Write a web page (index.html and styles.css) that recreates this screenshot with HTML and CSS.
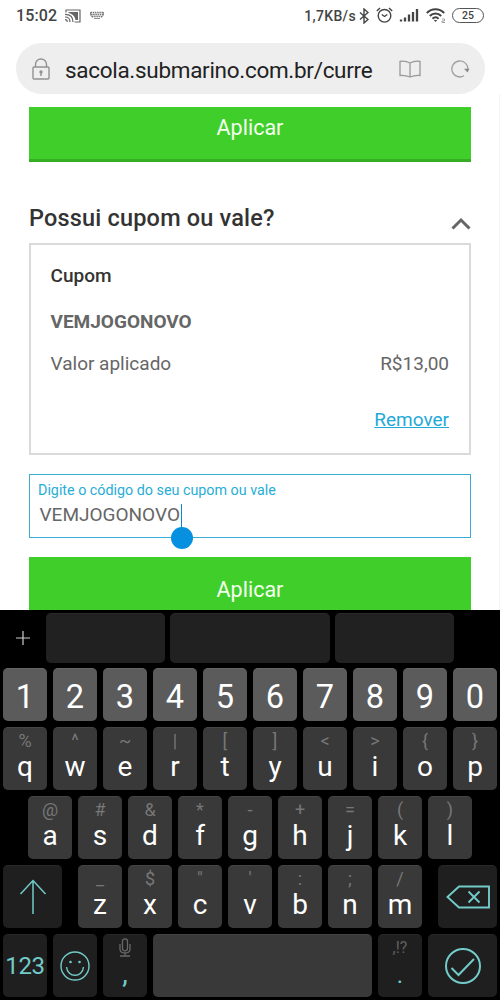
FILE: index.html
```html
<!DOCTYPE html>
<html lang="pt-BR">
<head>
<meta charset="utf-8">
<title>Sacola</title>
<link rel="stylesheet" href="styles.css">
</head>
<body>
<div class="screen">
  <header class="status">
    <span class="clock">15:02</span>
    <svg class="cast" width="16" height="14" viewBox="0 0 16 14" fill="none" stroke="#666" stroke-width="1.2"><path d="M1 3.500V1h14v12H9.500"/><path d="M3.500 3H13v8h-2.500C10 7 7 4.500 3.500 4z" fill="#666" stroke="none"/><path d="M0 5.300c5 0 8 3 8 7.700M0 8c3 0 5 2 5 5M0 10.700c1.500 0 2.300 1 2.300 2.300"/></svg>
    <svg class="kbd" width="14" height="9" viewBox="0 0 14 9" fill="none" stroke="#777"><path d="M.5 1.500h13M1 3.500h12M2 5.500h10" stroke-dasharray="1.500 .7" stroke-width="1.300"/><path d="M4 7.500h6M.5 1v3l2 2.500M13.500 1v3l-2 2.500" stroke-width=".8"/></svg>
    <span class="speed">1,7KB/s</span>
    <svg class="bt" width="10" height="16" viewBox="0 0 10 16" fill="none" stroke="#444" stroke-width="1.400"><path d="M1 4.500l8 7-4 3.500V1l4 3.500-8 7"/></svg>
    <svg class="alarm" width="17" height="16" viewBox="0 0 17 16" fill="none" stroke="#444" stroke-width="1.400"><circle cx="8.500" cy="8.800" r="6.300"/><path d="M5.800 7.500l2.700 2 2.800-2M.8 4L4 1M16.200 4L13 1"/></svg>
    <svg class="signal" width="20" height="14" viewBox="0 0 20 14" stroke="#444" stroke-width="2.300"><path d="M2 13.500v-2M6 13.500v-4M10 13.500V6.500M14 13.500V4M18 13.500V1"/></svg>
    <svg class="wifi" width="20" height="15" viewBox="0 0 20 15" fill="none" stroke="#444" stroke-width="2"><path d="M.8 5c5-5 12.400-5 17.400 0M3.800 8c3.200-3.500 8.200-3.500 11.400 0M6.500 10.800c2-2 4.500-2 6 0"/><path d="M7.800 12h3.400l-1.700 2z" fill="#444" stroke="none"/><path d="M16 11h2.500v2H16v1.500h3" stroke="#999" stroke-width=".9"/></svg>
    <span class="battery">25</span>
  </header>

  <div class="address">
    <svg class="lock" width="18" height="22" viewBox="0 0 18 22" fill="none" stroke="#929292" stroke-width="1.400"><rect x="1" y="9" width="16" height="12" rx="1"/><path d="M3.500 9V6.500a5.500 5.500 0 0 1 11 0V9M9 14v4"/><circle cx="9" cy="14" r="1" fill="#888"/></svg>
    <span class="url">sacola.submarino.com.br/curre</span>
    <svg class="book" width="22" height="18" viewBox="0 0 22 18" fill="none" stroke="#999" stroke-width="1.300"><path d="M11 3Q6 .5 1 1.500v14q5-.5 10 1.500 5-2 10-1.500v-14Q16 .5 11 3zM11 3v14"/></svg>
    <svg class="reload" width="19" height="18" viewBox="0 0 19 18" fill="none" stroke="#a0a0a0" stroke-width="1.300"><path d="M13 15.800A8 8 0 1 1 16.800 10"/><path d="M13 8.800h5.500L16.500 12.500z" fill="#888" stroke="none"/></svg>
  </div>

  <main class="page">
    <div class="apply apply-first">Aplicar</div>
    <div class="heading">
      <h1>Possui cupom ou vale?</h1>
      <svg width="20" height="13" viewBox="0 0 20 13" fill="none" stroke="#666" stroke-width="3"><path d="M1.500 11.500L10 3l8.500 8.500"/></svg>
    </div>
    <section class="coupon">
      <div class="coupon-title">Cupom</div>
      <div class="coupon-code">VEMJOGONOVO</div>
      <div class="coupon-value"><span>Valor aplicado</span><span>R$13,00</span></div>
      <a class="remove">Remover</a>
    </section>
    <div class="field">
      <div class="field-label">Digite o código do seu cupom ou vale</div>
      <div class="field-value"><span>VEMJOGONOVO</span><i class="caret"></i></div>
    </div>
    <div class="apply apply-last">Aplicar</div>
  </main>

  <div class="keyboard">
    <div class="suggest"><svg width="14" height="14" viewBox="0 0 14 14" stroke="#ccc" stroke-width="1.200"><path d="M0 7h14M7 0v14"/></svg><i></i><i></i><i></i></div>
    <div class="row numbers"><b>1</b><b>2</b><b>3</b><b>4</b><b>5</b><b>6</b><b>7</b><b>8</b><b>9</b><b>0</b></div>
    <div class="row">
      <div class="key"><small>%</small>q</div><div class="key"><small>^</small>w</div><div class="key"><small>~</small>e</div><div class="key"><small>|</small>r</div><div class="key"><small>[</small>t</div><div class="key"><small>]</small>y</div><div class="key"><small>&lt;</small>u</div><div class="key"><small>&gt;</small>i</div><div class="key"><small>{</small>o</div><div class="key"><small>}</small>p</div>
    </div>
    <div class="row">
      <div class="key"><small>@</small>a</div><div class="key"><small>#</small>s</div><div class="key"><small>&amp;</small>d</div><div class="key"><small>*</small>f</div><div class="key"><small>-</small>g</div><div class="key"><small>+</small>h</div><div class="key"><small>=</small>j</div><div class="key"><small>(</small>k</div><div class="key"><small>)</small>l</div>
    </div>
    <div class="row spread">
      <div class="key dark shift"><svg width="28" height="36" viewBox="0 0 28 36" fill="none" stroke="#72cbc9" stroke-width="1.500"><path d="M14 35V1.500M1.500 15L14 1.500 26.500 15"/></svg></div>
      <div class="group"><div class="key"><small>_</small>z</div><div class="key"><small>$</small>x</div><div class="key"><small>"</small>c</div><div class="key"><small>'</small>v</div><div class="key"><small>:</small>b</div><div class="key"><small>;</small>n</div><div class="key"><small>/</small>m</div></div>
      <div class="key dark shift"><svg width="44" height="24" viewBox="0 0 44 24" fill="none" stroke="#72cbc9" stroke-width="1.900"><path d="M1.500 12L13 1.500h30v21H13zM22.500 6.500l11 11M33.500 6.500l-11 11"/></svg></div>
    </div>
    <div class="row">
      <div class="key dark mode">123</div>
      <div class="key dark emoji"><svg width="30" height="30" viewBox="0 0 30 30" fill="none" stroke="#72cbc9" stroke-width="1.400"><circle cx="15" cy="15" r="14"/><path d="M6.500 16c1 11 16 11 17 0"/><circle cx="10.500" cy="11" r="1.300" fill="#72cbc9" stroke="none"/><circle cx="19.500" cy="11" r="1.300" fill="#72cbc9" stroke="none"/></svg></div>
      <div class="key dark comma"><svg width="12" height="19" viewBox="0 0 12 19" fill="none" stroke="#686868" stroke-width="1.300"><rect x="3.500" y=".8" width="5" height="12" rx="2.500"/><path d="M1 6v5q0 4 5 4t5-4V6M6 15v3M1 18h10"/></svg><span>,</span></div>
      <div class="key space"></div>
      <div class="key dark stop"><small>,!?</small><span>.</span></div>
      <div class="key dark enter"><svg width="36" height="36" viewBox="0 0 36 36" fill="none" stroke="#72cbc9" stroke-width="2"><circle cx="18" cy="18" r="17"/><path d="M6.500 20l7 7L29 11"/></svg></div>
    </div>
  </div>
</div>
</body>
</html>
```
FILE: styles.css
```css
* { box-sizing: border-box; }
body { margin: 0; background: #fff; font-family: Roboto, "Noto Sans", sans-serif; }
.screen { width: 500px; height: 1000px; overflow: hidden; display: flex; flex-direction: column; }
svg { display: block; flex: none; }

.status { height: 43px; padding: 0 16px; display: flex; align-items: flex-start; color: #444; flex: none; }
.clock { width: 42px; margin-top: 6px; font-size: 16px; line-height: 20px; font-weight: 500; letter-spacing: .1px; }
.cast { margin: 9px 0 0 7px; }
.kbd { margin: 11px 0 0 9px; }
.speed { margin: 7px 0 0 auto; font-size: 14px; line-height: 18px; font-weight: 500; letter-spacing: .35px; }
.bt { margin: 8px 0 0 3px; }
.alarm { margin: 7px 0 0 7px; }
.signal { margin: 8px 0 0 6px; }
.wifi { margin: 8px 0 0 7px; }
.battery { width: 32px; height: 15px; margin: 8px 0 0 6px; border: 1.5px solid #555; border-radius: 8px; font-size: 10.500px; line-height: 13px; font-weight: 500; text-align: center; }

.address { height: 51px; margin: 0 15px 0 16px; padding-left: 16px; border-radius: 26px; background: #eee; display: flex; align-items: center; flex: none; }
.url { width: 308px; margin-left: 15px; overflow: hidden; white-space: nowrap; font-size: 22.500px; letter-spacing: -.3px; line-height: 32px; color: #222; padding-top: 2px; }
.book { margin-left: 26px; }
.reload { margin-left: 30px; }

.page { height: 516px; padding: 13px 28px 0 29px; border-right: 1px solid #f4f4f4; flex: none; overflow: hidden; }
.apply { background: #40ce2a; color: #f4ffef; text-align: center; font-size: 21.500px; }
.apply-first { height: 55px; border-bottom: 3px solid #35ae23; line-height: 42px; }
.apply-last { height: 60px; margin-top: 19px; line-height: 66px; }
.heading { height: 81px; padding-top: 41px; display: flex; justify-content: space-between; }
.heading h1 { margin: 0; font-size: 23.500px; letter-spacing: .18px; line-height: 31px; font-weight: 500; color: #333; }
.heading svg { margin-top: 14px; }
.coupon { height: 212px; border: 2px solid #dadada; padding: 19px 20px 0 19.500px; color: #666; font-size: 19px; line-height: 24px; display: flex; flex-direction: column; }
.coupon-title { font-weight: 500; color: #333; }
.coupon-code { margin-top: 22px; font-weight: 700; }
.coupon-value { margin-top: 18px; display: flex; justify-content: space-between; }
.remove { margin-top: 32px; align-self: flex-end; color: #1fa9d8; text-decoration: underline; }
.field { height: 64px; margin-top: 19px; padding: 5px 9px 0 8px; border: 1px solid #3aabd2; }
.field-label { font-size: 14.300px; line-height: 20px; color: #27add6; }
.field-value { display: flex; padding-left: 1.500px; font-size: 19px; line-height: 30px; color: #666; }
.caret { position: relative; width: 1.500px; height: 26px; margin: 4px 0 0 .6px; background: #0788d1; }
.caret::after { content: ""; position: absolute; left: -10px; top: 23px; width: 22px; height: 22px; border-radius: 50%; background: #0690df; }

.keyboard { height: 390px; flex: none; background: #000; padding: 3px 3px 0; display: flex; flex-direction: column; gap: 6px; }
.suggest { height: 50px; display: grid; grid-template-columns: 38px 119px 160px 119px; column-gap: 5px; align-items: stretch; flex: none; }
.suggest svg { margin: 18px 0 0 13px; }
.suggest i { background: #212121; border-radius: 5px; border-top: 1px solid #292929; }
.row { height: 63px; display: flex; justify-content: center; gap: 6px; flex: none; }
.numbers { height: 53px; margin-top: -.6px; }
.numbers b { width: 44px; padding-top: 2px; background: #5b5b5b; border-top: 1px solid #666; border-radius: 5px; color: #fff; font-weight: 400; font-size: 32.500px; line-height: 52px; text-align: center; }
.key { width: 44px; height: 63px; padding-top: 3px; background: #393939; border-top: 1px solid #444; border-radius: 5px; color: #fff; font-size: 28px; line-height: 31px; text-align: center; flex: none; }
.key small { display: block; font-size: 18px; line-height: 20px; color: #777; }
.group { display: flex; gap: 6px; }
.spread { justify-content: space-between; }
.dark { background: #1f1f1f; border-top-color: #282828; color: #72cbc9; }
.shift { width: 59px; }
.shift, .emoji, .enter { display: flex; align-items: center; justify-content: center; padding: 0; }
.mode { padding-top: 16px; font-size: 24px; letter-spacing: -.3px; }
.comma svg { margin: 0 auto; }
.comma span { display: block; line-height: 34px; }
.stop small { font-size: 16px; color: #606060; }
.stop span { display: block; font-size: 24px; line-height: 34px; }
.space { width: 219px; }
.enter { width: 69px; }
```
